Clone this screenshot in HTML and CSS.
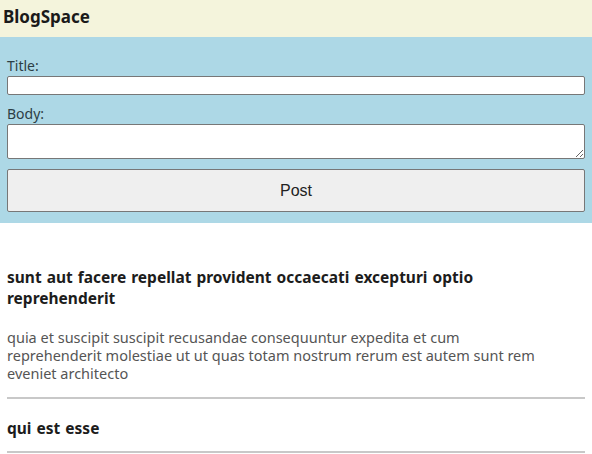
FILE: index.html
```html
<!DOCTYPE html>
<html>
<head>
<meta charset="utf-8">
<link rel="stylesheet" href="styles.css">
</head>
<body>
<header class="topbar">BlogSpace</header>
<form class="composer">
  <label class="lbl" for="t">Title:</label>
  <input class="field" id="t" type="text">
  <label class="lbl lbl-body" for="b">Body:</label>
  <textarea class="field area" id="b"></textarea>
  <button class="post-btn" type="button">Post</button>
</form>
<main class="posts">
  <article class="post">
    <h3 class="post-title">sunt aut facere repellat provident occaecati excepturi optio reprehenderit</h3>
    <p class="post-body">quia et suscipit suscipit recusandae consequuntur expedita et cum<br>reprehenderit molestiae ut ut quas totam nostrum rerum est autem sunt rem eveniet architecto</p>
  </article>
  <hr class="sep">
  <article class="post">
    <h3 class="post-title">qui est esse</h3>
  </article>
  <hr class="sep">
</main>
</body>
</html>
```
FILE: styles.css
```css
html, body { margin: 0; padding: 0; background: #fff; }
body { font-family: "Noto Sans", "Open Sans", sans-serif; color: #222; }
.topbar {
  background: #f4f4dc;
  height: 37px;
  line-height: 34px;
  padding: 0 3px;
  font-weight: 700;
  font-size: 17px;
  color: #1a1a1a;
}
.composer {
  background: #add8e6;
  padding: 20px 7px 11px;
  display: flex;
  flex-direction: column;
}
.lbl { font-size: 14px; line-height: 17px; color: #2c3e45; margin-bottom: 2px; }
.lbl-body { margin-top: 10px; }
.field {
  box-sizing: border-box;
  width: 100%;
  margin: 0;
  border: 1px solid #777;
  border-radius: 2px;
  background: #fff;
  height: 19px;
  font: inherit;
}
.area { height: 35px; resize: vertical; }
.post-btn {
  margin-top: 10px;
  box-sizing: border-box;
  width: 100%;
  height: 43px;
  background: #efefef;
  border: 1px solid #777;
  border-radius: 2px;
  font-family: "Liberation Sans", Arial, sans-serif;
  font-size: 16px;
  color: #222;
}
.posts { padding: 0 7px; }
.post-title {
  margin: 44px 0 0;
  font-size: 15.5px;
  word-spacing: 1px;
  line-height: 21px;
  font-weight: 700;
  color: #1c1c1c;
}
.post-body {
  margin: 19px 0 0;
  font-size: 14.5px;
  line-height: 18px;
  color: #555;
}
.sep { border: 0; border-top: 2px solid #c8c8c8; margin: 15px 0 0; }
.post + .sep + .post .post-title { margin-top: 19px; }
.sep:last-child { margin-top: 12px; }
```
